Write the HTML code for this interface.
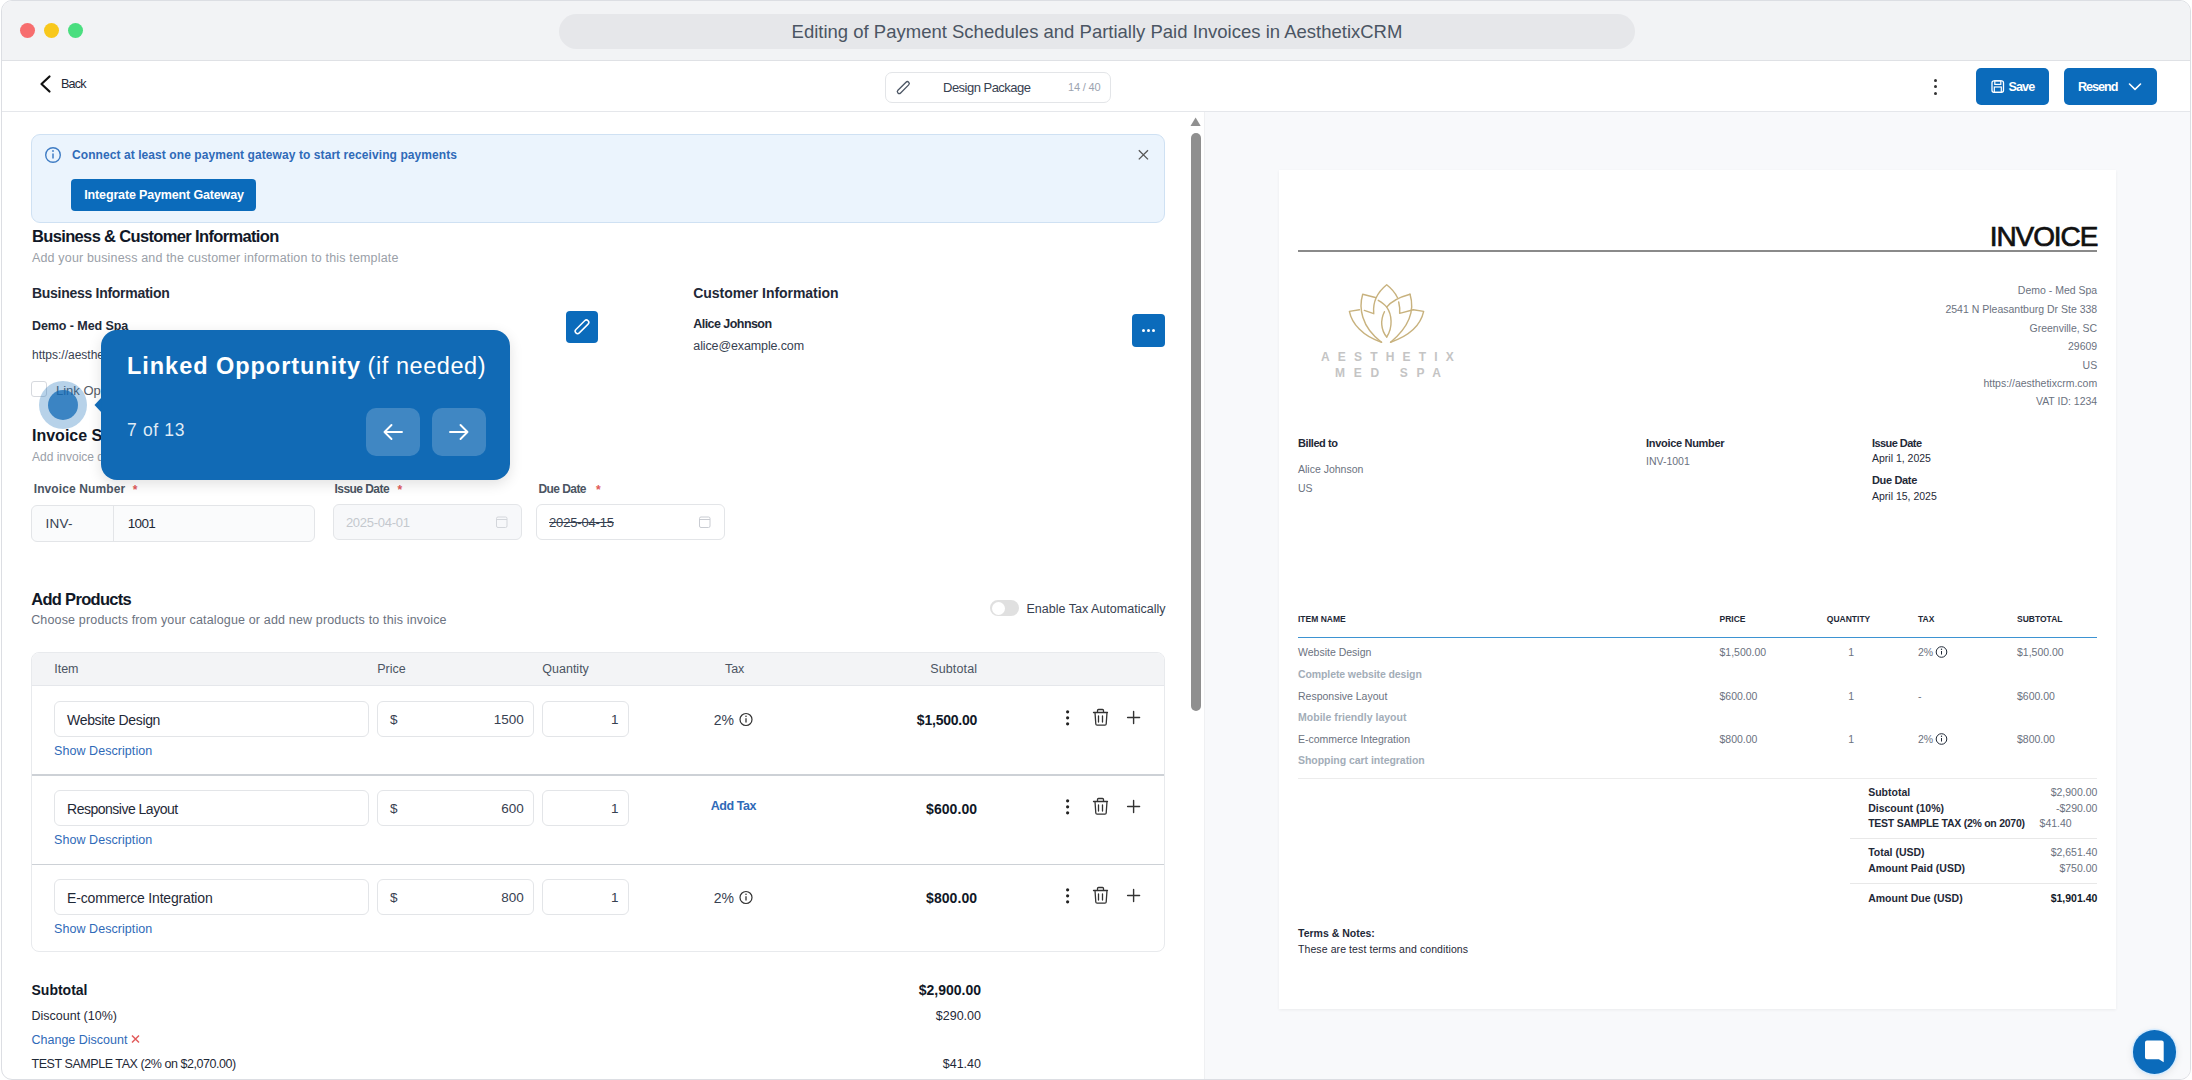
<!DOCTYPE html>
<html><head><meta charset="utf-8">
<style>
*{box-sizing:border-box;margin:0;padding:0}
html,body{width:2192px;height:1080px;overflow:hidden;background:#fff;font-family:"Liberation Sans",sans-serif;color:#111827}
.a{position:absolute}
.t{position:absolute;white-space:nowrap}
.win{position:absolute;left:1px;top:0;width:2190px;height:1080px;border:1px solid #dcdee3;border-radius:11px;overflow:hidden;background:#fff}
.tb{position:absolute;left:0;top:0;width:100%;height:60px;background:#f2f3f5;border-bottom:1px solid #dfe1e5}
.dot{position:absolute;width:15px;height:15px;border-radius:50%;top:22px}
.pill{position:absolute;left:557px;top:13px;width:1076px;height:35px;border-radius:18px;background:#e6e7ea;color:#4b5563;font-size:18.5px;text-align:center;line-height:35px}
.btn{position:absolute;background:#0b6bbb;border-radius:5px}
.inp{position:absolute;border:1px solid #e3e5e8;border-radius:6px;background:#fff}
svg{position:absolute;overflow:visible}
</style></head><body>
<div class="win">
  <div class="tb">
    <div class="dot" style="left:18px;background:#f76d6e"></div>
    <div class="dot" style="left:42px;background:#f8c81c"></div>
    <div class="dot" style="left:66px;background:#4ade7f"></div>
    <div class="pill">Editing of Payment Schedules and Partially Paid Invoices in AesthetixCRM</div>
  </div>
</div>
<!-- header line -->
<div class="a" style="left:2px;top:111px;width:2188px;height:1px;background:#e5e7eb"></div>
<!-- right preview bg -->
<div class="a" style="left:1204px;top:112px;width:986px;height:967px;background:#f8f9fb;border-left:1px solid #eff0f2;border-bottom-right-radius:10px"></div>
<!-- back chevron -->
<svg style="left:0;top:0" width="2192" height="1080">
  <polyline points="49.5,76.5 41.5,84 49.5,91.5" fill="none" stroke="#111" stroke-width="2.2" stroke-linecap="round" stroke-linejoin="round"/>
</svg>
<!-- design package pill -->
<div class="a" style="left:885px;top:72px;width:226px;height:31px;border:1px solid #e3e5e8;border-radius:7px;background:#fff"></div>
<svg style="left:0;top:0" width="2192" height="1080">
  <rect x="-1.9" y="-7.6" width="3.8" height="15.2" rx="1.9" transform="translate(903.3,87.6) rotate(45)" fill="none" stroke="#4b5563" stroke-width="1.3"/>
</svg>
<!-- kebab -->
<div class="a" style="left:1934px;top:78.5px;width:3.4px;height:3.4px;border-radius:50%;background:#333"></div>
<div class="a" style="left:1934px;top:85px;width:3.4px;height:3.4px;border-radius:50%;background:#333"></div>
<div class="a" style="left:1934px;top:91.5px;width:3.4px;height:3.4px;border-radius:50%;background:#333"></div>
<!-- save / resend -->
<div class="btn" style="left:1976px;top:68px;width:73px;height:37px"></div>
<div class="btn" style="left:2064px;top:68px;width:93px;height:37px"></div>
<svg style="left:0;top:0" width="2192" height="1080">
  <rect x="1992" y="80.8" width="11.5" height="11.5" rx="2" fill="none" stroke="#fff" stroke-width="1.3"/>
  <rect x="1994.8" y="80.8" width="6" height="3.6" fill="none" stroke="#fff" stroke-width="1.2"/>
  <rect x="1994.3" y="87" width="7" height="5.3" fill="none" stroke="#fff" stroke-width="1.2"/>
  <polyline points="2129.5,84 2135,89.3 2140.5,84" fill="none" stroke="#fff" stroke-width="1.6" stroke-linecap="round" stroke-linejoin="round"/>
</svg>

<!-- banner -->
<div class="a" style="left:31px;top:134px;width:1134px;height:89px;background:#ebf4fd;border:1px solid #cfe1f3;border-radius:9px"></div>
<svg style="left:0;top:0" width="2192" height="1080">
  <circle cx="53" cy="155" r="7.3" fill="none" stroke="#3f7cc4" stroke-width="1.4"/>
  <line x1="53" y1="153.5" x2="53" y2="158.5" stroke="#3f7cc4" stroke-width="1.5"/>
  <circle cx="53" cy="151" r="0.9" fill="#3f7cc4"/>
  <path d="M1138.8,150.2 L1148,159.4 M1148,150.2 L1138.8,159.4" stroke="#555" stroke-width="1.3"/>
</svg>
<div class="btn" style="left:71px;top:179px;width:185px;height:32px;border-radius:4px"></div>

<!-- scrollbar -->
<svg style="left:0;top:0" width="2192" height="1080">
  <polygon points="1195.6,117.5 1190.5,126 1200.7,126" fill="#909090"/>
</svg>
<div class="a" style="left:1191px;top:133px;width:10px;height:578px;border-radius:5px;background:#8f8f8f"></div>

<!-- business edit btn -->
<div class="btn" style="left:566px;top:311px;width:32px;height:32px;border-radius:4px"></div>
<svg style="left:0;top:0" width="2192" height="1080">
  <rect x="-2.4" y="-8.6" width="4.8" height="17.2" rx="2.4" transform="translate(582,326.8) rotate(45)" fill="none" stroke="#fff" stroke-width="1.5"/>
</svg>
<!-- customer more btn -->
<div class="btn" style="left:1132px;top:314px;width:33px;height:33px;border-radius:4px"></div>
<div class="a" style="left:1142.3px;top:329.3px;width:3px;height:3px;border-radius:50%;background:#fff"></div>
<div class="a" style="left:1147.3px;top:329.3px;width:3px;height:3px;border-radius:50%;background:#fff"></div>
<div class="a" style="left:1152.3px;top:329.3px;width:3px;height:3px;border-radius:50%;background:#fff"></div>

<!-- checkbox -->
<div class="a" style="left:31px;top:381px;width:16px;height:16px;border:1px solid #d6d9de;border-radius:3px;background:#fff"></div>

<!-- invoice inputs -->
<div class="inp" style="left:31px;top:505px;width:284px;height:37px;background:#fafbfc"></div>
<div class="a" style="left:113px;top:506px;width:1px;height:35px;background:#e3e5e8"></div>
<div class="inp" style="left:333px;top:504px;width:189px;height:36px;background:#f7f8fa"></div>
<div class="inp" style="left:536px;top:504px;width:189px;height:36px"></div>
<svg style="left:0;top:0" width="2192" height="1080">
  <rect x="496.5" y="517" width="10.5" height="10.5" rx="1.5" fill="none" stroke="#d3d6db" stroke-width="1"/>
  <line x1="496.5" y1="519.5" x2="507" y2="519.5" stroke="#d3d6db" stroke-width="1"/>
  <rect x="699.5" y="517" width="10.5" height="10.5" rx="1.5" fill="none" stroke="#c9ccd2" stroke-width="1"/>
  <line x1="699.5" y1="519.5" x2="710" y2="519.5" stroke="#c9ccd2" stroke-width="1"/>
</svg>

<!-- toggle -->
<div class="a" style="left:990px;top:600px;width:29px;height:16px;border-radius:8px;background:#e0e0e0"></div>
<div class="a" style="left:991.5px;top:601.5px;width:13px;height:13px;border-radius:50%;background:#fff"></div>

<!-- table -->
<div class="a" style="left:31px;top:652px;width:1134px;height:300px;border:1px solid #e8eaed;border-radius:8px;background:#fff;overflow:hidden">
  <div class="a" style="left:0;top:0;width:100%;height:33px;background:#f3f4f6;border-bottom:1px solid #e5e7eb"></div>
  <div class="a" style="left:0;top:121.3px;width:100%;height:1.5px;background:#cdd1d6"></div>
  <div class="a" style="left:0;top:210.5px;width:100%;height:1.5px;background:#cdd1d6"></div>
</div>
<div class="inp" style="left:54px;top:701px;width:315px;height:36px"></div>
<div class="inp" style="left:377px;top:701px;width:157px;height:36px"></div>
<div class="inp" style="left:542px;top:701px;width:87px;height:36px"></div>
<svg style="left:0;top:0" width="2192" height="1080">
<circle cx="746" cy="719.5" r="6" fill="none" stroke="#333" stroke-width="1.2"/><line x1="746" y1="718.3" x2="746" y2="722.5" stroke="#333" stroke-width="1.3"/><circle cx="746" cy="716.3" r="0.8" fill="#333"/>
<circle cx="1067.6" cy="711.8" r="1.6" fill="#222"/>
<circle cx="1067.6" cy="717.8" r="1.6" fill="#222"/>
<circle cx="1067.6" cy="723.8" r="1.6" fill="#222"/>
<path d="M1093.5,712.5 h14 M1097.5,712.5 v-2 a1,1 0 0 1 1,-1 h4 a1,1 0 0 1 1,1 v2 M1095,712.5 l0.8,11.5 a1.3,1.3 0 0 0 1.3,1.2 h7.8 a1.3,1.3 0 0 0 1.3,-1.2 l0.8,-11.5 M1098.5,716.0 v6 M1102.5,716.0 v6" fill="none" stroke="#333" stroke-width="1.3" stroke-linecap="round" stroke-linejoin="round"/>
<path d="M1133.6,711.5 v12 M1127.6,717.5 h12" stroke="#333" stroke-width="1.4" stroke-linecap="round"/>
</svg>
<div class="inp" style="left:54px;top:790px;width:315px;height:36px"></div>
<div class="inp" style="left:377px;top:790px;width:157px;height:36px"></div>
<div class="inp" style="left:542px;top:790px;width:87px;height:36px"></div>
<svg style="left:0;top:0" width="2192" height="1080">
<circle cx="1067.6" cy="800.8" r="1.6" fill="#222"/>
<circle cx="1067.6" cy="806.8" r="1.6" fill="#222"/>
<circle cx="1067.6" cy="812.8" r="1.6" fill="#222"/>
<path d="M1093.5,801.5 h14 M1097.5,801.5 v-2 a1,1 0 0 1 1,-1 h4 a1,1 0 0 1 1,1 v2 M1095,801.5 l0.8,11.5 a1.3,1.3 0 0 0 1.3,1.2 h7.8 a1.3,1.3 0 0 0 1.3,-1.2 l0.8,-11.5 M1098.5,805.0 v6 M1102.5,805.0 v6" fill="none" stroke="#333" stroke-width="1.3" stroke-linecap="round" stroke-linejoin="round"/>
<path d="M1133.6,800.5 v12 M1127.6,806.5 h12" stroke="#333" stroke-width="1.4" stroke-linecap="round"/>
</svg>
<div class="inp" style="left:54px;top:879px;width:315px;height:36px"></div>
<div class="inp" style="left:377px;top:879px;width:157px;height:36px"></div>
<div class="inp" style="left:542px;top:879px;width:87px;height:36px"></div>
<svg style="left:0;top:0" width="2192" height="1080">
<circle cx="746" cy="897.5" r="6" fill="none" stroke="#333" stroke-width="1.2"/><line x1="746" y1="896.3" x2="746" y2="900.5" stroke="#333" stroke-width="1.3"/><circle cx="746" cy="894.3" r="0.8" fill="#333"/>
<circle cx="1067.6" cy="889.8" r="1.6" fill="#222"/>
<circle cx="1067.6" cy="895.8" r="1.6" fill="#222"/>
<circle cx="1067.6" cy="901.8" r="1.6" fill="#222"/>
<path d="M1093.5,890.5 h14 M1097.5,890.5 v-2 a1,1 0 0 1 1,-1 h4 a1,1 0 0 1 1,1 v2 M1095,890.5 l0.8,11.5 a1.3,1.3 0 0 0 1.3,1.2 h7.8 a1.3,1.3 0 0 0 1.3,-1.2 l0.8,-11.5 M1098.5,894.0 v6 M1102.5,894.0 v6" fill="none" stroke="#333" stroke-width="1.3" stroke-linecap="round" stroke-linejoin="round"/>
<path d="M1133.6,889.5 v12 M1127.6,895.5 h12" stroke="#333" stroke-width="1.4" stroke-linecap="round"/>
</svg>
<svg style="left:0;top:0" width="2192" height="1080"><path d="M132,1035.5 l7,7 M139,1035.5 l-7,7" stroke="#e25c5c" stroke-width="1.5"/></svg>
<!-- tooltip -->
<div class="a" style="z-index:10;left:39px;top:381px;width:48px;height:48px;border-radius:50%;background:rgba(17,106,181,.3)"></div>
<div class="a" style="z-index:10;left:48px;top:390px;width:30px;height:30px;border-radius:50%;background:rgba(17,106,181,.75)"></div>
<div class="a" style="z-index:10;left:101px;top:330px;width:409px;height:150px;border-radius:16px;background:#116ab5;box-shadow:0 4px 14px rgba(0,0,0,.12)"></div>
<svg style="left:0;top:0;z-index:10" width="2192" height="1080"><polygon points="94.5,405 101.5,397.5 101.5,412.5" fill="#116ab5"/></svg>
<div class="a" style="z-index:11;left:366px;top:408px;width:54px;height:48px;border-radius:10px;background:rgba(255,255,255,.2)"></div>
<div class="a" style="z-index:11;left:432px;top:408px;width:54px;height:48px;border-radius:10px;background:rgba(255,255,255,.2)"></div>
<svg style="left:0;top:0;z-index:12" width="2192" height="1080">
<path d="M402,432 h-17.5 M391.5,425 l-7,7 l7,7" fill="none" stroke="#fff" stroke-width="1.9" stroke-linecap="round" stroke-linejoin="round"/>
<path d="M450,432 h17.5 M460.5,425 l7,7 l-7,7" fill="none" stroke="#fff" stroke-width="1.9" stroke-linecap="round" stroke-linejoin="round"/>
</svg>
<!-- chat -->
<div class="a" style="left:2132.5px;top:1030px;width:43.5px;height:43.5px;border-radius:50%;background:#0b6bbb;box-shadow:0 0 0 1.5px #d6ecff,0 2px 8px rgba(0,0,0,.1)"></div>
<svg style="left:0;top:0" width="2192" height="1080"><path d="M2147,1040.6 h14.7 a2,2 0 0 1 2,2 v19.6 l-4.8,-2.9 h-11.9 a2,2 0 0 1 -2,-2 v-14.7 a2,2 0 0 1 2,-2 z" fill="#fff"/></svg>
<!-- paper -->
<div class="a" style="left:1279px;top:170px;width:837px;height:839px;background:#fff;box-shadow:0 1px 3px rgba(0,0,0,.06)"></div>
<div class="a" style="left:1298px;top:250px;width:799px;height:2px;background:#8a8a8a"></div>
<div class="a" style="left:1298px;top:636.5px;width:799px;height:1.5px;background:#3d93d2"></div>
<div class="a" style="left:1298px;top:777.5px;width:799px;height:1px;background:#ececec"></div>
<div class="a" style="left:1850px;top:837.5px;width:247px;height:1.5px;background:#e8e8e8"></div>
<div class="a" style="left:1850px;top:882.5px;width:247px;height:1.5px;background:#e8e8e8"></div>
<svg style="left:0;top:0" width="2192" height="1080">
<g fill="none" stroke="#1f2937" stroke-width="1">
<circle cx="1941.5" cy="652" r="5.3"/><line x1="1941.5" y1="651" x2="1941.5" y2="654.5"/>
<circle cx="1941.5" cy="739" r="5.3"/><line x1="1941.5" y1="738" x2="1941.5" y2="741.5"/>
</g>
<circle cx="1941.5" cy="649.3" r="0.7" fill="#1f2937"/><circle cx="1941.5" cy="736.3" r="0.7" fill="#1f2937"/>
</svg>
<svg style="left:0;top:0" width="2192" height="1080">
<g transform="translate(1340,278) scale(0.06485)" fill="none" stroke="#c8b27e" stroke-width="22" stroke-linejoin="round" stroke-linecap="round">
<path d="M375,500 L520,550 C505,400 540,250 720,105 C790,160 850,230 885,300"/>
<path d="M905,370 C920,430 925,480 920,545 L1130,490"/>
<path d="M590,345 C650,380 700,420 720,450 C780,370 860,310 1080,250"/>
<path d="M720,450 C800,560 820,760 720,910"/>
<path d="M685,520 C620,650 630,800 720,910"/>
<path d="M545,300 L350,250 C290,450 320,750 640,990"/>
<path d="M300,490 L145,515 C180,700 350,900 640,990"/>
<path d="M1080,250 C1140,450 1130,700 780,990"/>
<path d="M1130,490 L1290,515 C1250,700 1100,880 780,990"/>
</g></svg>
<div class="t" id="t0" style="top:77.63px;font-size:12.6px;line-height:12.6px;font-weight:400;color:#1f2937;left:61.00px;letter-spacing:-0.800px;">Back</div>
<div class="t" id="t1" style="top:81.10px;font-size:13px;line-height:13px;font-weight:400;color:#374151;left:943.00px;letter-spacing:-0.513px;">Design Package</div>
<div class="t" id="t2" style="top:81.89px;font-size:11px;line-height:11px;font-weight:400;color:#9ca3af;left:1068.00px;letter-spacing:-0.190px;">14 / 40</div>
<div class="t" id="t3" style="top:80.93px;font-size:12.6px;line-height:12.6px;font-weight:700;color:#fff;left:2008.40px;letter-spacing:-0.874px;">Save</div>
<div class="t" id="t4" style="top:80.93px;font-size:12.6px;line-height:12.6px;font-weight:700;color:#fff;left:2078.00px;letter-spacing:-1.000px;">Resend</div>
<div class="t" id="t5" style="top:148.94px;font-size:12px;line-height:12px;font-weight:700;color:#2f6ab8;left:72.00px;letter-spacing:0.077px;">Connect at least one payment gateway to start receiving payments</div>
<div class="t" id="t6" style="top:188.82px;font-size:12.5px;line-height:12.5px;font-weight:700;color:#fff;left:84.30px;letter-spacing:-0.153px;">Integrate Payment Gateway</div>
<div class="t" id="t7" style="top:228.23px;font-size:16.5px;line-height:16.5px;font-weight:700;color:#111827;left:32.00px;letter-spacing:-0.650px;">Business &amp; Customer Information</div>
<div class="t" id="t8" style="top:251.82px;font-size:12.5px;line-height:12.5px;font-weight:400;color:#9aa0a8;left:32.00px;letter-spacing:0.160px;">Add your business and the customer information to this template</div>
<div class="t" id="t9" style="top:286.15px;font-size:14px;line-height:14px;font-weight:700;color:#1f2937;left:32.00px;letter-spacing:-0.286px;">Business Information</div>
<div class="t" id="t10" style="top:320.02px;font-size:12.5px;line-height:12.5px;font-weight:700;color:#1f2937;left:32.00px;letter-spacing:-0.073px;">Demo - Med Spa</div>
<div class="t" id="t11" style="top:349.04px;font-size:12px;line-height:12px;font-weight:400;color:#374151;left:32.00px;">https://aesthetixcrm.com</div>
<div class="t" id="t12" style="top:383.50px;font-size:13px;line-height:13px;font-weight:400;color:#555b65;left:56.00px;">Link Opportunity</div>
<div class="t" id="t13" style="top:286.45px;font-size:14px;line-height:14px;font-weight:700;color:#1f2937;left:693.30px;letter-spacing:-0.049px;">Customer Information</div>
<div class="t" id="t14" style="top:317.82px;font-size:12.5px;line-height:12.5px;font-weight:700;color:#1f2937;left:693.30px;letter-spacing:-0.553px;">Alice Johnson</div>
<div class="t" id="t15" style="top:340.12px;font-size:12.5px;line-height:12.5px;font-weight:400;color:#374151;left:693.30px;letter-spacing:-0.121px;">alice@example.com</div>
<div class="t" id="t16" style="top:428.06px;font-size:16px;line-height:16px;font-weight:700;color:#111827;left:32.00px;">Invoice Settings</div>
<div class="t" id="t17" style="top:451.14px;font-size:12px;line-height:12px;font-weight:400;color:#9aa0a8;left:32.00px;">Add invoice details to this template</div>
<div class="t" id="t18" style="top:482.64px;font-size:12px;line-height:12px;font-weight:700;color:#4b5563;left:33.70px;letter-spacing:0.113px;">Invoice Number</div>
<div class="t" id="t19" style="top:483.84px;font-size:12px;line-height:12px;font-weight:700;color:#e05a5a;left:132.80px;">*</div>
<div class="t" id="t20" style="top:482.64px;font-size:12px;line-height:12px;font-weight:700;color:#4b5563;left:334.60px;letter-spacing:-0.559px;">Issue Date</div>
<div class="t" id="t21" style="top:483.84px;font-size:12px;line-height:12px;font-weight:700;color:#e05a5a;left:397.50px;">*</div>
<div class="t" id="t22" style="top:482.64px;font-size:12px;line-height:12px;font-weight:700;color:#4b5563;left:538.50px;letter-spacing:-0.574px;">Due Date</div>
<div class="t" id="t23" style="top:483.84px;font-size:12px;line-height:12px;font-weight:700;color:#e05a5a;left:596.00px;">*</div>
<div class="t" id="t24" style="top:516.87px;font-size:13.5px;line-height:13.5px;font-weight:400;color:#374151;left:45.60px;letter-spacing:0.245px;">INV-</div>
<div class="t" id="t25" style="top:516.87px;font-size:13.5px;line-height:13.5px;font-weight:400;color:#1f2937;left:127.80px;letter-spacing:-0.682px;">1001</div>
<div class="t" id="t26" style="top:515.60px;font-size:13px;line-height:13px;font-weight:400;color:#c4c8ce;left:345.90px;letter-spacing:-0.278px;">2025-04-01</div>
<div class="t" id="t27" style="top:515.60px;font-size:13px;line-height:13px;font-weight:400;color:#374151;left:549.00px;text-decoration:line-through;letter-spacing:-0.167px;">2025-04-15</div>
<div class="t" id="t28" style="top:591.23px;font-size:16.5px;line-height:16.5px;font-weight:700;color:#111827;left:31.20px;letter-spacing:-0.688px;">Add Products</div>
<div class="t" id="t29" style="top:614.42px;font-size:12.5px;line-height:12.5px;font-weight:400;color:#6b7280;left:31.20px;letter-spacing:0.157px;">Choose products from your catalogue or add new products to this invoice</div>
<div class="t" id="t30" style="top:603.22px;font-size:12.5px;line-height:12.5px;font-weight:400;color:#374151;left:1026.50px;letter-spacing:0.011px;">Enable Tax Automatically</div>
<div class="t" id="t31" style="top:662.82px;font-size:12.5px;line-height:12.5px;font-weight:400;color:#4b5563;left:54.20px;">Item</div>
<div class="t" id="t32" style="top:662.82px;font-size:12.5px;line-height:12.5px;font-weight:400;color:#4b5563;left:377.20px;">Price</div>
<div class="t" id="t33" style="top:662.82px;font-size:12.5px;line-height:12.5px;font-weight:400;color:#4b5563;left:542.30px;">Quantity</div>
<div class="t" id="t34" style="top:662.82px;font-size:12.5px;line-height:12.5px;font-weight:400;color:#4b5563;left:724.90px;">Tax</div>
<div class="t" id="t35" style="top:662.82px;font-size:12.5px;line-height:12.5px;font-weight:400;color:#4b5563;left:930.20px;letter-spacing:0.146px;">Subtotal</div>
<div class="t" id="t36" style="top:713.05px;font-size:14px;line-height:14px;font-weight:400;color:#1f2937;left:67.10px;letter-spacing:-0.346px;">Website Design</div>
<div class="t" id="t37" style="top:713.47px;font-size:13.5px;line-height:13.5px;font-weight:400;color:#374151;left:390.10px;">$</div>
<div class="t" id="t38" style="top:713.47px;font-size:13.5px;line-height:13.5px;font-weight:400;color:#374151;right:1668.30px;">1500</div>
<div class="t" id="t39" style="top:713.47px;font-size:13.5px;line-height:13.5px;font-weight:400;color:#374151;right:1573.50px;">1</div>
<div class="t" id="t40" style="top:713.05px;font-size:14px;line-height:14px;font-weight:400;color:#374151;left:713.80px;">2%</div>
<div class="t" id="t41" style="top:713.05px;font-size:14px;line-height:14px;font-weight:700;color:#111827;right:1214.90px;letter-spacing:-0.225px;">$1,500.00</div>
<div class="t" id="t42" style="top:744.92px;font-size:12.5px;line-height:12.5px;font-weight:400;color:#2f6ab8;left:54.00px;letter-spacing:0.062px;">Show Description</div>
<div class="t" id="t43" style="top:802.05px;font-size:14px;line-height:14px;font-weight:400;color:#1f2937;left:67.10px;letter-spacing:-0.505px;">Responsive Layout</div>
<div class="t" id="t44" style="top:802.47px;font-size:13.5px;line-height:13.5px;font-weight:400;color:#374151;left:390.10px;">$</div>
<div class="t" id="t45" style="top:802.47px;font-size:13.5px;line-height:13.5px;font-weight:400;color:#374151;right:1668.30px;">600</div>
<div class="t" id="t46" style="top:802.47px;font-size:13.5px;line-height:13.5px;font-weight:400;color:#374151;right:1573.50px;">1</div>
<div class="t" id="t47" style="top:800.12px;font-size:12.5px;line-height:12.5px;font-weight:700;color:#2f6ab8;left:710.70px;letter-spacing:-0.448px;">Add Tax</div>
<div class="t" id="t48" style="top:802.05px;font-size:14px;line-height:14px;font-weight:700;color:#111827;right:1214.90px;letter-spacing:0.065px;">$600.00</div>
<div class="t" id="t49" style="top:833.92px;font-size:12.5px;line-height:12.5px;font-weight:400;color:#2f6ab8;left:54.00px;letter-spacing:0.062px;">Show Description</div>
<div class="t" id="t50" style="top:891.05px;font-size:14px;line-height:14px;font-weight:400;color:#1f2937;left:67.10px;letter-spacing:-0.181px;">E-commerce Integration</div>
<div class="t" id="t51" style="top:891.47px;font-size:13.5px;line-height:13.5px;font-weight:400;color:#374151;left:390.10px;">$</div>
<div class="t" id="t52" style="top:891.47px;font-size:13.5px;line-height:13.5px;font-weight:400;color:#374151;right:1668.30px;">800</div>
<div class="t" id="t53" style="top:891.47px;font-size:13.5px;line-height:13.5px;font-weight:400;color:#374151;right:1573.50px;">1</div>
<div class="t" id="t54" style="top:891.05px;font-size:14px;line-height:14px;font-weight:400;color:#374151;left:713.80px;">2%</div>
<div class="t" id="t55" style="top:891.05px;font-size:14px;line-height:14px;font-weight:700;color:#111827;right:1214.90px;letter-spacing:0.065px;">$800.00</div>
<div class="t" id="t56" style="top:922.92px;font-size:12.5px;line-height:12.5px;font-weight:400;color:#2f6ab8;left:54.00px;letter-spacing:0.062px;">Show Description</div>
<div class="t" id="t57" style="top:982.65px;font-size:14px;line-height:14px;font-weight:700;color:#111827;left:31.50px;">Subtotal</div>
<div class="t" id="t58" style="top:982.65px;font-size:14px;line-height:14px;font-weight:700;color:#111827;right:1211.00px;">$2,900.00</div>
<div class="t" id="t59" style="top:1009.62px;font-size:12.5px;line-height:12.5px;font-weight:400;color:#1f2937;left:31.50px;">Discount (10%)</div>
<div class="t" id="t60" style="top:1009.62px;font-size:12.5px;line-height:12.5px;font-weight:400;color:#1f2937;right:1211.00px;">$290.00</div>
<div class="t" id="t61" style="top:1034.12px;font-size:12.5px;line-height:12.5px;font-weight:400;color:#2f6ab8;left:31.50px;">Change Discount</div>
<div class="t" id="t62" style="top:1057.62px;font-size:12.5px;line-height:12.5px;font-weight:400;color:#1f2937;left:31.50px;letter-spacing:-0.440px;">TEST SAMPLE TAX (2% on $2,070.00)</div>
<div class="t" id="t63" style="top:1057.62px;font-size:12.5px;line-height:12.5px;font-weight:400;color:#1f2937;right:1211.00px;">$41.40</div>
<div class="t" id="t64" style="top:355.31px;font-size:23.5px;line-height:23.5px;font-weight:700;color:#fff;left:127.00px;z-index:20;letter-spacing:0.958px;">Linked Opportunity</div>
<div class="t" id="t65" style="top:355.31px;font-size:23.5px;line-height:23.5px;font-weight:400;color:#fff;left:367.60px;z-index:20;letter-spacing:0.564px;">(if needed)</div>
<div class="t" id="t66" style="top:421.99px;font-size:17.5px;line-height:17.5px;font-weight:400;color:rgba(255,255,255,.88);left:127.00px;z-index:20;letter-spacing:0.661px;">7 of 13</div>
<div class="t" id="t67" style="top:223.20px;font-size:28px;line-height:28px;font-weight:400;color:#111;right:94.80px;-webkit-text-stroke:0.7px #111;letter-spacing:-1.107px;">INVOICE</div>
<div class="t" id="t68" style="top:285.21px;font-size:10.5px;line-height:10.5px;font-weight:400;color:#6b7280;right:94.80px;">Demo - Med Spa</div>
<div class="t" id="t69" style="top:303.51px;font-size:10.5px;line-height:10.5px;font-weight:400;color:#6b7280;right:94.80px;">2541 N Pleasantburg Dr Ste 338</div>
<div class="t" id="t70" style="top:322.51px;font-size:10.5px;line-height:10.5px;font-weight:400;color:#6b7280;right:94.80px;">Greenville, SC</div>
<div class="t" id="t71" style="top:340.81px;font-size:10.5px;line-height:10.5px;font-weight:400;color:#6b7280;right:94.80px;">29609</div>
<div class="t" id="t72" style="top:359.81px;font-size:10.5px;line-height:10.5px;font-weight:400;color:#6b7280;right:94.80px;">US</div>
<div class="t" id="t73" style="top:378.11px;font-size:10.5px;line-height:10.5px;font-weight:400;color:#6b7280;right:94.80px;">https://aesthetixcrm.com</div>
<div class="t" id="t74" style="top:396.41px;font-size:10.5px;line-height:10.5px;font-weight:400;color:#6b7280;right:94.80px;">VAT ID: 1234</div>
<div class="t" id="t75" style="top:351.09px;font-size:12px;line-height:12px;font-weight:700;color:#c4c4c4;left:1321.00px;letter-spacing:9px;letter-spacing:8.170px;">AESTHETIX</div>
<div class="t" id="t76" style="top:366.84px;font-size:12px;line-height:12px;font-weight:700;color:#c4c4c4;left:1335.00px;letter-spacing:9px;letter-spacing:8.701px;">MED SPA</div>
<div class="t" id="t77" style="top:437.99px;font-size:11px;line-height:11px;font-weight:700;color:#1f2937;left:1298.00px;letter-spacing:-0.424px;">Billed to</div>
<div class="t" id="t78" style="top:464.01px;font-size:10.5px;line-height:10.5px;font-weight:400;color:#6b7280;left:1298.00px;">Alice Johnson</div>
<div class="t" id="t79" style="top:482.81px;font-size:10.5px;line-height:10.5px;font-weight:400;color:#6b7280;left:1298.00px;">US</div>
<div class="t" id="t80" style="top:437.99px;font-size:11px;line-height:11px;font-weight:700;color:#1f2937;left:1646.00px;letter-spacing:-0.302px;">Invoice Number</div>
<div class="t" id="t81" style="top:456.31px;font-size:10.5px;line-height:10.5px;font-weight:400;color:#6b7280;left:1646.00px;">INV-1001</div>
<div class="t" id="t82" style="top:437.99px;font-size:11px;line-height:11px;font-weight:700;color:#1f2937;left:1872.00px;letter-spacing:-0.559px;">Issue Date</div>
<div class="t" id="t83" style="top:452.51px;font-size:10.5px;line-height:10.5px;font-weight:400;color:#1f2937;left:1872.00px;">April 1, 2025</div>
<div class="t" id="t84" style="top:474.79px;font-size:11px;line-height:11px;font-weight:700;color:#1f2937;left:1872.00px;letter-spacing:-0.341px;">Due Date</div>
<div class="t" id="t85" style="top:490.81px;font-size:10.5px;line-height:10.5px;font-weight:400;color:#1f2937;left:1872.00px;">April 15, 2025</div>
<div class="t" id="t86" style="top:615.00px;font-size:8.5px;line-height:8.5px;font-weight:700;color:#1f2937;left:1298.00px;">ITEM NAME</div>
<div class="t" id="t87" style="top:615.00px;font-size:8.5px;line-height:8.5px;font-weight:700;color:#1f2937;left:1719.50px;">PRICE</div>
<div class="t" id="t88" style="top:615.00px;font-size:8.5px;line-height:8.5px;font-weight:700;color:#1f2937;left:1826.80px;">QUANTITY</div>
<div class="t" id="t89" style="top:615.00px;font-size:8.5px;line-height:8.5px;font-weight:700;color:#1f2937;left:1918.00px;">TAX</div>
<div class="t" id="t90" style="top:615.00px;font-size:8.5px;line-height:8.5px;font-weight:700;color:#1f2937;left:2017.00px;">SUBTOTAL</div>
<div class="t" id="t91" style="top:646.71px;font-size:10.5px;line-height:10.5px;font-weight:400;color:#6b7280;left:1298.00px;">Website Design</div>
<div class="t" id="t92" style="top:668.51px;font-size:10.5px;line-height:10.5px;font-weight:700;color:#a3adb8;left:1298.00px;letter-spacing:-0.101px;">Complete website design</div>
<div class="t" id="t93" style="top:646.71px;font-size:10.5px;line-height:10.5px;font-weight:400;color:#6b7280;left:1719.50px;">$1,500.00</div>
<div class="t" id="t94" style="top:646.71px;font-size:10.5px;line-height:10.5px;font-weight:400;color:#6b7280;left:1848.30px;">1</div>
<div class="t" id="t95" style="top:646.71px;font-size:10.5px;line-height:10.5px;font-weight:400;color:#6b7280;left:1918.00px;">2%</div>
<div class="t" id="t96" style="top:646.71px;font-size:10.5px;line-height:10.5px;font-weight:400;color:#6b7280;left:2017.00px;">$1,500.00</div>
<div class="t" id="t97" style="top:690.71px;font-size:10.5px;line-height:10.5px;font-weight:400;color:#6b7280;left:1298.00px;">Responsive Layout</div>
<div class="t" id="t98" style="top:711.81px;font-size:10.5px;line-height:10.5px;font-weight:700;color:#a3adb8;left:1298.00px;letter-spacing:0.027px;">Mobile friendly layout</div>
<div class="t" id="t99" style="top:690.71px;font-size:10.5px;line-height:10.5px;font-weight:400;color:#6b7280;left:1719.50px;">$600.00</div>
<div class="t" id="t100" style="top:690.71px;font-size:10.5px;line-height:10.5px;font-weight:400;color:#6b7280;left:1848.30px;">1</div>
<div class="t" id="t101" style="top:690.71px;font-size:10.5px;line-height:10.5px;font-weight:400;color:#6b7280;left:1918.00px;">-</div>
<div class="t" id="t102" style="top:690.71px;font-size:10.5px;line-height:10.5px;font-weight:400;color:#6b7280;left:2017.00px;">$600.00</div>
<div class="t" id="t103" style="top:733.71px;font-size:10.5px;line-height:10.5px;font-weight:400;color:#6b7280;left:1298.00px;">E-commerce Integration</div>
<div class="t" id="t104" style="top:755.11px;font-size:10.5px;line-height:10.5px;font-weight:700;color:#a3adb8;left:1298.00px;letter-spacing:-0.040px;">Shopping cart integration</div>
<div class="t" id="t105" style="top:733.71px;font-size:10.5px;line-height:10.5px;font-weight:400;color:#6b7280;left:1719.50px;">$800.00</div>
<div class="t" id="t106" style="top:733.71px;font-size:10.5px;line-height:10.5px;font-weight:400;color:#6b7280;left:1848.30px;">1</div>
<div class="t" id="t107" style="top:733.71px;font-size:10.5px;line-height:10.5px;font-weight:400;color:#6b7280;left:1918.00px;">2%</div>
<div class="t" id="t108" style="top:733.71px;font-size:10.5px;line-height:10.5px;font-weight:400;color:#6b7280;left:2017.00px;">$800.00</div>
<div class="t" id="t109" style="top:787.11px;font-size:10.5px;line-height:10.5px;font-weight:700;color:#1f2937;left:1868.20px;">Subtotal</div>
<div class="t" id="t110" style="top:787.11px;font-size:10.5px;line-height:10.5px;font-weight:400;color:#6b7280;right:94.60px;">$2,900.00</div>
<div class="t" id="t111" style="top:802.51px;font-size:10.5px;line-height:10.5px;font-weight:700;color:#1f2937;left:1868.20px;">Discount (10%)</div>
<div class="t" id="t112" style="top:802.51px;font-size:10.5px;line-height:10.5px;font-weight:400;color:#6b7280;right:94.60px;">-$290.00</div>
<div class="t" id="t113" style="top:847.31px;font-size:10.5px;line-height:10.5px;font-weight:700;color:#1f2937;left:1868.20px;">Total (USD)</div>
<div class="t" id="t114" style="top:847.31px;font-size:10.5px;line-height:10.5px;font-weight:400;color:#6b7280;right:94.60px;">$2,651.40</div>
<div class="t" id="t115" style="top:862.61px;font-size:10.5px;line-height:10.5px;font-weight:700;color:#1f2937;left:1868.20px;">Amount Paid (USD)</div>
<div class="t" id="t116" style="top:862.61px;font-size:10.5px;line-height:10.5px;font-weight:400;color:#6b7280;right:94.60px;">$750.00</div>
<div class="t" id="t117" style="top:817.81px;font-size:10.5px;line-height:10.5px;font-weight:700;color:#1f2937;left:1868.20px;letter-spacing:-0.257px;">TEST SAMPLE TAX (2% on 2070)</div>
<div class="t" id="t118" style="top:817.81px;font-size:10.5px;line-height:10.5px;font-weight:400;color:#6b7280;right:120.30px;">$41.40</div>
<div class="t" id="t119" style="top:892.51px;font-size:10.5px;line-height:10.5px;font-weight:700;color:#1f2937;left:1868.20px;">Amount Due (USD)</div>
<div class="t" id="t120" style="top:892.51px;font-size:10.5px;line-height:10.5px;font-weight:700;color:#111827;right:94.60px;">$1,901.40</div>
<div class="t" id="t121" style="top:927.81px;font-size:10.5px;line-height:10.5px;font-weight:700;color:#1f2937;left:1298.00px;">Terms &amp; Notes:</div>
<div class="t" id="t122" style="top:943.91px;font-size:10.5px;line-height:10.5px;font-weight:400;color:#1f2937;left:1298.00px;letter-spacing:0.091px;">These are test terms and conditions</div>
</body></html>
